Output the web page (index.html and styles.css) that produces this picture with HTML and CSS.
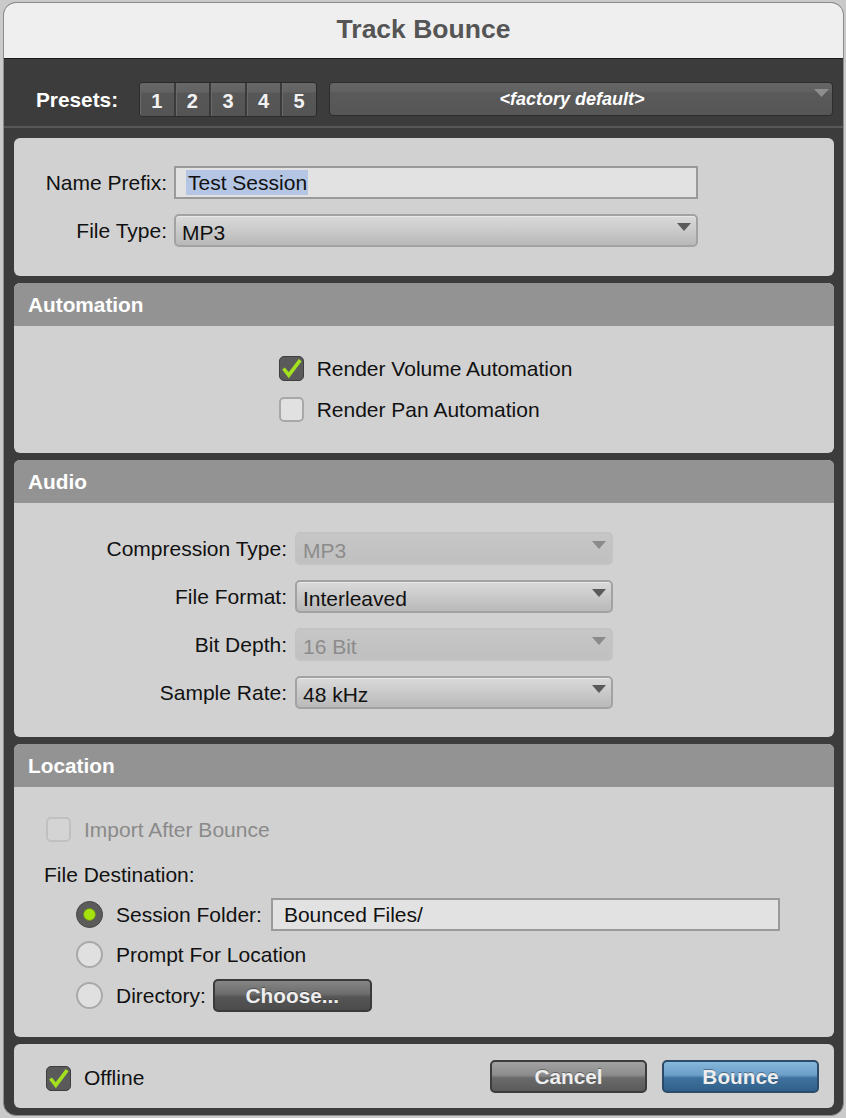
FILE: index.html
```html
<!DOCTYPE html>
<html lang="en">
<head>
<meta charset="utf-8">
<title>Track Bounce</title>
<link rel="stylesheet" href="styles.css">
</head>
<body>
<div class="window">
  <div class="titlebar">Track Bounce</div>

  <div class="presets">
    <span class="presets-label">Presets:</span>
    <div class="preset-group">
      <span class="preset-btn">1</span>
      <span class="preset-btn">2</span>
      <span class="preset-btn">3</span>
      <span class="preset-btn">4</span>
      <span class="preset-btn">5</span>
    </div>
    <div class="preset-menu">
      <span class="preset-menu-text">&lt;factory default&gt;</span>
      <svg class="preset-arrow" viewBox="0 0 15 8" width="15" height="8"><polygon points="0,0 15,0 7.5,8" /></svg>
    </div>
  </div>

  <div class="content">
    <section class="panel">
      <div class="form form-general">
        <span class="flabel">Name Prefix:</span>
        <div class="textfield"><span class="selection">Test Session</span></div>
        <span class="flabel">File Type:</span>
        <div class="select">
          <span class="select-text">MP3</span>
          <svg class="select-arrow" viewBox="0 0 14 8" width="14" height="8"><polygon points="0,0 14,0 7,8" /></svg>
        </div>
      </div>
    </section>

    <section class="panel">
      <div class="panel-header">Automation</div>
      <div class="automation-body">
        <div class="checklist">
          <div class="check-item">
            <span class="checkbox checked">
              <svg viewBox="0 0 25 25" width="25" height="25"><path d="M4.5 12.5 L9.8 19.2 L21.2 4.2" /></svg>
            </span>
            <span>Render Volume Automation</span>
          </div>
          <div class="check-item">
            <span class="checkbox"></span>
            <span>Render Pan Automation</span>
          </div>
        </div>
      </div>
    </section>

    <section class="panel">
      <div class="panel-header">Audio</div>
      <div class="form form-audio">
        <span class="flabel">Compression Type:</span>
        <div class="select disabled">
          <span class="select-text">MP3</span>
          <svg class="select-arrow" viewBox="0 0 14 8" width="14" height="8"><polygon points="0,0 14,0 7,8" /></svg>
        </div>
        <span class="flabel">File Format:</span>
        <div class="select">
          <span class="select-text">Interleaved</span>
          <svg class="select-arrow" viewBox="0 0 14 8" width="14" height="8"><polygon points="0,0 14,0 7,8" /></svg>
        </div>
        <span class="flabel">Bit Depth:</span>
        <div class="select disabled">
          <span class="select-text">16 Bit</span>
          <svg class="select-arrow" viewBox="0 0 14 8" width="14" height="8"><polygon points="0,0 14,0 7,8" /></svg>
        </div>
        <span class="flabel">Sample Rate:</span>
        <div class="select">
          <span class="select-text">48 kHz</span>
          <svg class="select-arrow" viewBox="0 0 14 8" width="14" height="8"><polygon points="0,0 14,0 7,8" /></svg>
        </div>
      </div>
    </section>

    <section class="panel">
      <div class="panel-header">Location</div>
      <div class="location-body">
        <div class="check-item disabled-item">
          <span class="checkbox disabled"></span>
          <span>Import After Bounce</span>
        </div>
        <div class="dest-label">File Destination:</div>
        <div class="radio-row row-session">
          <span class="radio on"><span class="radio-dot"></span></span>
          <span class="radio-label">Session Folder:</span>
          <div class="textfield folder-field">Bounced Files/</div>
        </div>
        <div class="radio-row row-prompt">
          <span class="radio"></span>
          <span class="radio-label">Prompt For Location</span>
        </div>
        <div class="radio-row row-dir">
          <span class="radio"></span>
          <span class="radio-label">Directory:</span>
          <span class="btn btn-choose">Choose...</span>
        </div>
      </div>
    </section>

    <section class="panel footer">
      <div class="check-item">
        <span class="checkbox checked">
          <svg viewBox="0 0 25 25" width="25" height="25"><path d="M4.5 12.5 L9.8 19.2 L21.2 4.2" /></svg>
        </span>
        <span>Offline</span>
      </div>
      <div class="footer-buttons">
        <span class="btn btn-gray">Cancel</span>
        <span class="btn btn-blue">Bounce</span>
      </div>
    </section>
  </div>
</div>
</body>
</html>
```

FILE: styles.css
```css
* {
  box-sizing: border-box;
}

html, body {
  margin: 0;
  padding: 0;
}

body {
  width: 846px;
  height: 1118px;
  overflow: hidden;
  background: #cacaca;
  font-family: "Liberation Sans", Arial, Helvetica, sans-serif;
  font-size: 21px;
  color: #111;
}

.window {
  margin: 2px 0 0 3px;
  width: 841px;
  height: 1114px;
  border: 1px solid #8c8c8c;
  border-radius: 13px;
  overflow: hidden;
  background: #3c3c3c;
  display: flex;
  flex-direction: column;
}

/* ---------- title bar ---------- */
.titlebar {
  flex: none;
  height: 56px;
  background: #efefef;
  border-bottom: 1px solid #1b1b1b;
  display: flex;
  align-items: center;
  justify-content: center;
  font-size: 26.5px;
  font-weight: bold;
  color: #555;
  padding-bottom: 2px;
}

/* ---------- presets ---------- */
.presets {
  flex: none;
  height: 69px;
  border-bottom: 2px solid #575757;
  display: flex;
  align-items: flex-start;
  padding: 23px 0 0 32px;
}

.presets-label {
  width: 103px;
  height: 35px;
  line-height: 35px;
  font-weight: bold;
  font-size: 20.8px;
  color: #fff;
}

.preset-group {
  display: flex;
  width: 178px;
  height: 35px;
  border: 1px solid #2a2a2a;
  border-radius: 4px;
  overflow: hidden;
  background: #3a3a3a;
  gap: 2px;
}

.preset-btn {
  flex: 1;
  display: flex;
  align-items: center;
  justify-content: center;
  padding-top: 3px;
  font-weight: bold;
  font-size: 20px;
  color: #f2f2f2;
  background: linear-gradient(#686868 0, #626262 28%, #575757 30%, #545454 100%);
  box-shadow: inset 1px 0 0 #6a6a6a;
}

.preset-menu {
  margin-left: 12px;
  width: 504px;
  height: 34px;
  border: 1px solid #2c2c2c;
  border-radius: 4px;
  background: linear-gradient(#666 0, #616161 28%, #5a5a5a 30%, #565656 100%);
  display: flex;
  align-items: center;
  padding-right: 3px;
}

.preset-menu-text {
  flex: 1;
  text-align: center;
  font-weight: bold;
  font-style: italic;
  font-size: 18px;
  color: #fff;
  padding-top: 1px;
}

.preset-arrow {
  align-self: flex-start;
  margin-top: 6px;
  fill: #8e8e8e;
}

/* ---------- content ---------- */
.content {
  flex: 1;
  display: flex;
  flex-direction: column;
  gap: 7px;
  padding: 10px 9px 0 10px;
}

.panel {
  background: #d1d1d1;
  border-radius: 6px;
  overflow: hidden;
  flex: none;
}

.panel-header {
  height: 43px;
  background: #939393;
  color: #fff;
  font-weight: bold;
  font-size: 20.8px;
  display: flex;
  align-items: center;
  padding-left: 14px;
}

.form {
  display: grid;
  align-items: center;
  row-gap: 15px;
}

.form-general {
  grid-template-columns: 153px 524px;
  column-gap: 7px;
  padding: 28px 0 29px 0;
}

.form-audio {
  grid-template-columns: 273px 318px;
  column-gap: 8px;
  padding: 29px 0 28px 0;
}

.flabel {
  text-align: right;
  white-space: nowrap;
}

.textfield {
  height: 33px;
  background: #e2e2e2;
  border: 2px solid #9a9a9a;
  display: flex;
  align-items: center;
  padding-left: 10px;
}

.selection {
  background: #b4c6e4;
  padding: 1px 1px 0 2px;
  line-height: 24px;
}

.select {
  height: 33px;
  border: 2px solid #a2a2a2;
  border-radius: 5px;
  background: linear-gradient(#dadada 0, #cdcdcd 40%, #b9b9b9 100%);
  box-shadow: inset 0 1px 0 #e8e8e8;
  display: flex;
  align-items: center;
  padding: 4px 5px 0 6px;
}

.select-text {
  flex: 1;
}

.select-arrow {
  align-self: flex-start;
  margin-top: 3px;
  fill: #5a5a5a;
}

.select.disabled {
  border-color: #c3c3c3;
  background: linear-gradient(#c6c6c6, #c0c0c0);
  box-shadow: none;
  color: #8c8c8c;
}

.select.disabled .select-arrow {
  fill: #8b8b8b;
}

/* ---------- checkboxes ---------- */
.automation-body {
  display: flex;
  justify-content: center;
  padding: 30px 0 31px 0;
}

.checklist {
  display: flex;
  flex-direction: column;
  gap: 16px;
  margin-left: 3px;
}

.check-item {
  display: flex;
  align-items: center;
  gap: 13px;
  height: 25px;
  white-space: nowrap;
}

.checkbox {
  flex: none;
  width: 25px;
  height: 25px;
  border-radius: 5px;
  background: #e1e1e1;
  border: 2px solid #a8a8a8;
  display: flex;
  align-items: center;
  justify-content: center;
}

.checkbox.checked {
  background: #5a5a5a;
  border: 1px solid #3e3e3e;
}

.checkbox svg {
  flex: none;
  fill: none;
  stroke: #a3e01e;
  stroke-width: 3.6;
  stroke-linejoin: miter;
}

.checkbox.disabled {
  background: #d4d4d4;
  border-color: #c0c0c0;
}

.disabled-item {
  color: #8a8a8a;
}

/* ---------- location ---------- */
.location-body {
  padding: 30px 0 25px 32px;
  display: flex;
  flex-direction: column;
}

.dest-label {
  margin-top: 21px;
  height: 24px;
  line-height: 24px;
  margin-left: -2px;
}

.radio-row {
  display: flex;
  align-items: center;
  padding-left: 30px;
  white-space: nowrap;
}

.row-session {
  margin-top: 11px;
  height: 33px;
}

.row-prompt {
  margin-top: 10px;
  height: 27px;
}

.row-dir {
  margin-top: 11px;
  height: 33px;
}

.radio {
  flex: none;
  width: 27px;
  height: 27px;
  border-radius: 50%;
  background: #e0e0e0;
  border: 2px solid #a9a9a9;
  margin-right: 13px;
  display: flex;
  align-items: center;
  justify-content: center;
}

.radio.on {
  background: #5b5b5b;
  border: 1px solid #444;
}

.radio-dot {
  width: 13px;
  height: 13px;
  border-radius: 50%;
  background: #a6e20e;
  border: 1px solid #6e8f1c;
}

.folder-field {
  margin-left: 9px;
  width: 509px;
  padding-left: 11px;
}

.btn {
  display: flex;
  align-items: center;
  justify-content: center;
  height: 33px;
  border-radius: 5px;
  font-weight: bold;
  font-size: 20.8px;
  color: #eeeeee;
  text-shadow: 0 -1px 0 rgba(0, 0, 0, 0.35);
  white-space: nowrap;
}

.btn-choose {
  margin-left: 7px;
  width: 159px;
  border: 2px solid #3a3a3a;
  background: linear-gradient(#858585 0, #6c6c6c 45%, #555 55%, #4b4b4b 100%);
}

/* ---------- footer ---------- */
.footer {
  height: 64px;
  display: flex;
  align-items: center;
  justify-content: space-between;
  padding: 1px 15px 0 32px;
}

.footer .check-item {
  margin-top: 3px;
}

.footer-buttons {
  display: flex;
  gap: 15px;
}

.btn-gray {
  width: 157px;
  border: 2px solid #3c3c3c;
  background: linear-gradient(#a2a2a2 0, #8c8c8c 45%, #6a6a6a 55%, #5a5a5a 100%);
}

.btn-blue {
  width: 157px;
  border: 2px solid #2b4b69;
  background: linear-gradient(#86b7dc 0, #6b9fc8 45%, #3e729e 55%, #30608a 100%);
}
```
